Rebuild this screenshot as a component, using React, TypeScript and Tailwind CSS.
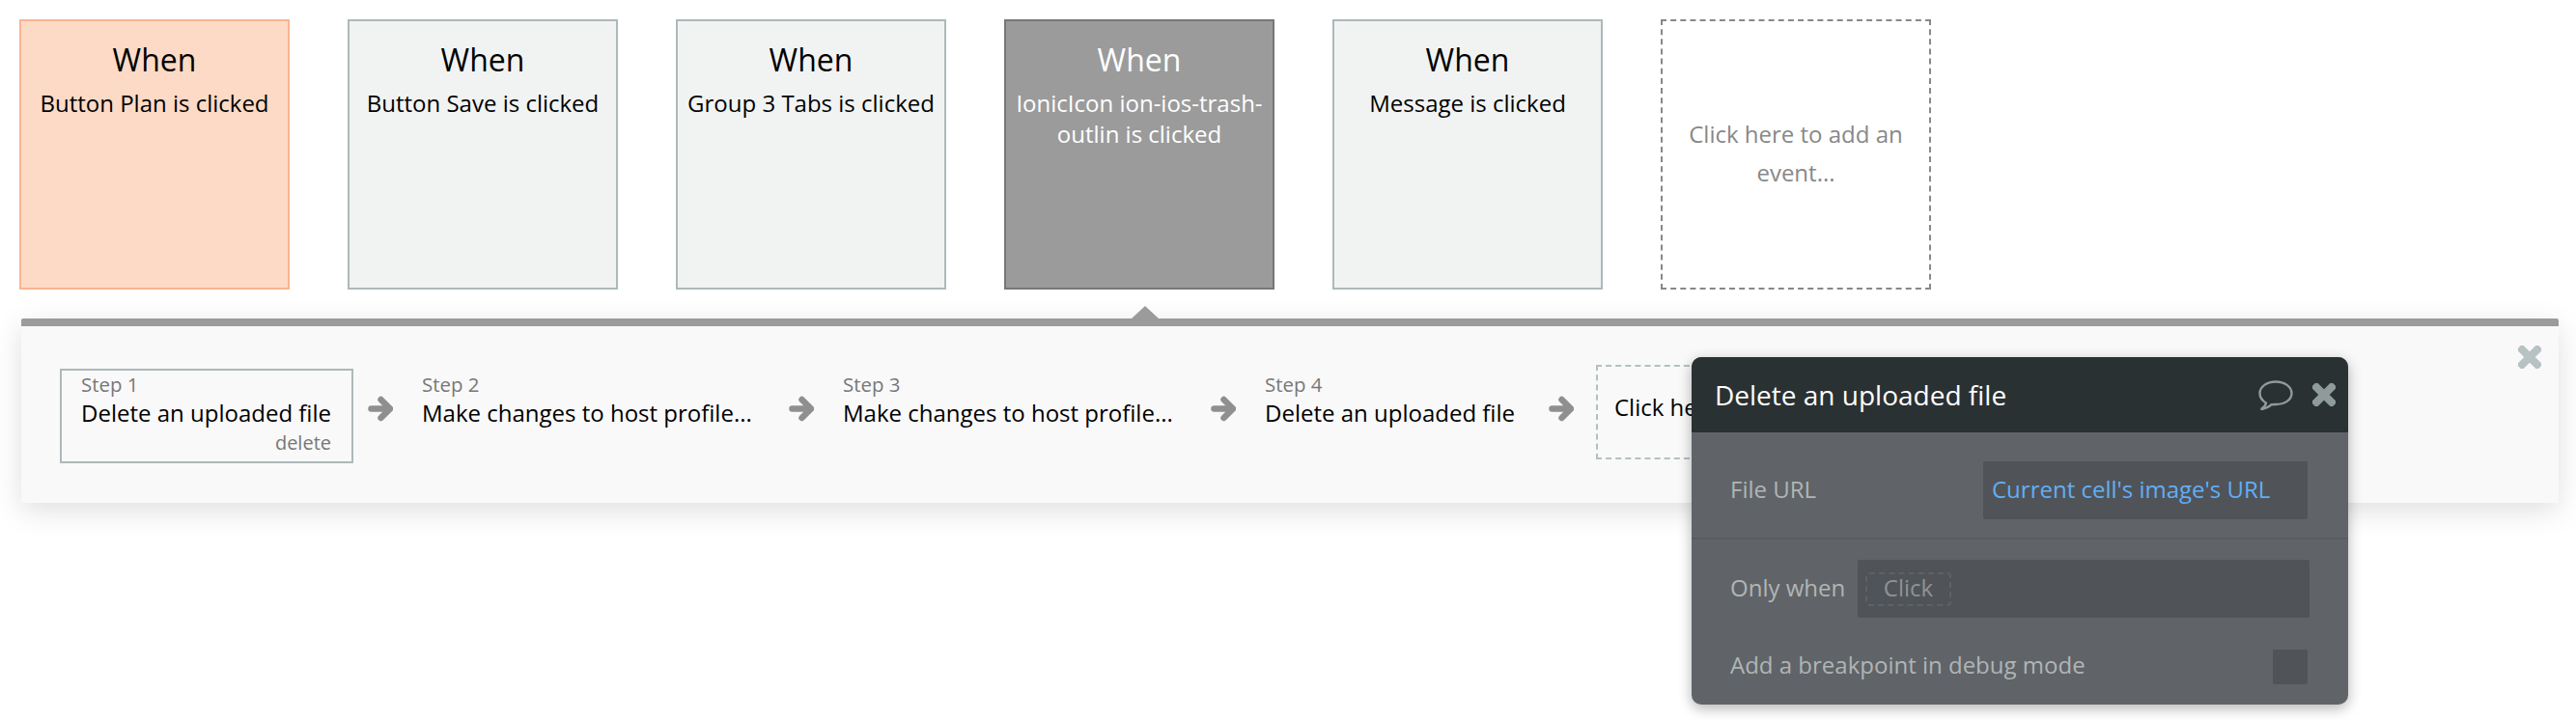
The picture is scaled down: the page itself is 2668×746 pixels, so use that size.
const font = { fontFamily: '"Open Sans", sans-serif' };

const events = [
  { text: 'Button Plan is clicked', box: 'bg-[#fddac5] border-[#f9b48f] text-black' },
  { text: 'Button Save is clicked', box: 'bg-[#f1f3f2] border-[#adb9bb] text-black' },
  { text: 'Group 3 Tabs is clicked', box: 'bg-[#f1f3f2] border-[#adb9bb] text-black' },
  { text: 'IonicIcon ion-ios-trash-outlin is clicked', box: 'bg-[#9b9b9b] border-[#777777] text-white' },
  { text: 'Message is clicked', box: 'bg-[#f1f3f2] border-[#adb9bb] text-black' },
];

const steps = [
  { label: 'Step 1', title: 'Delete an uploaded file', width: 'w-[304px]', active: true },
  { label: 'Step 2', title: 'Make changes to host profile...', width: 'w-[387px]', active: false },
  { label: 'Step 3', title: 'Make changes to host profile...', width: 'w-[388px]', active: false },
  { label: 'Step 4', title: 'Delete an uploaded file', width: 'w-[301px]', active: false },
];

const CloseIcon = ({ color, className }: { color: string; className?: string }) => (
  <svg viewBox="0 0 24 24" className={className} fill={color}>
    <rect x="-3" y="8" width="30" height="8" rx="1.5" transform="rotate(45 12 12)" />
    <rect x="-3" y="8" width="30" height="8" rx="1.5" transform="rotate(-45 12 12)" />
  </svg>
);

const ArrowIcon = () => (
  <svg viewBox="0 0 26 27" className="w-[26px] h-[27px]" fill="none" stroke="#8f8f8f" strokeWidth="6.5" strokeLinejoin="round" strokeLinecap="round">
    <path d="M3.5 13.5H21" />
    <path d="M13.5 4l9.5 9.5L13.5 23" />
  </svg>
);

const BubbleIcon = () => (
  <svg viewBox="0 0 36 31" className="w-[36px] h-[31px]" fill="none" stroke="#8f9a9a" strokeWidth="2.4">
    <path d="M3.5 29.5c2.5-1.5 4-3.5 4.5-6C4 21 1.5 17.5 1.5 13.5 1.5 6.5 9 1.5 18 1.5s16.5 5 16.5 12-7.5 11.5-16.5 11.5c-1.5 0-3 0-4.5.2-2.5 2.5-6 4-10 4.8z" />
  </svg>
);

const EventCard = ({ text, box }: { text: string; box: string }) => (
  <div className={`w-[280px] h-[280px] shrink-0 border-2 px-[6px] pt-[17px] text-center ${box}`}>
    <div className="text-[32px] leading-[46px]">When</div>
    <div className="text-[24px] leading-[32px] mt-[6px]">{text}</div>
  </div>
);

const StepBox = ({ label, title, width, active }: { label: string; title: string; width: string; active: boolean }) => (
  <div className={`h-[98px] shrink-0 border-2 pl-[20px] pr-[21px] ${width} ${active ? 'border-[#adb9bb]' : 'border-transparent'}`}>
    <div className="text-[20.4px] leading-[28px] text-[#777777]">{label}</div>
    <div className="text-[24px] leading-[32px] text-black whitespace-nowrap">{title}</div>
    {active && <div className="text-[20px] leading-[28px] text-right text-[#777777] mt-[1px]">delete</div>}
  </div>
);

export default function App() {
  return (
    <div style={font} className="relative w-[2668px] h-[746px] overflow-hidden bg-white">
      {/* Event row */}
      <div className="flex gap-[60px] pl-[20px] pt-[20px]">
        {events.map((e) => (
          <EventCard key={e.text} text={e.text} box={e.box} />
        ))}
        <div className="w-[280px] h-[280px] shrink-0 border-2 border-dashed border-[#888888] flex items-center justify-center px-[20px] pb-[2px] text-center text-[24px] leading-[40px] text-[#888888]">
          Click here to add an event...
        </div>
      </div>

      {/* Actions panel */}
      <div className="relative ml-[22px] mt-[30px] w-[2628px] h-[191px] border-t-[8px] border-[#9b9b9b] rounded-[2px] bg-[#f9f9f9] shadow-[0_8px_30px_rgba(0,0,0,0.13)]">
        <div className="absolute left-[1150px] top-[-21px] w-0 h-0 border-x-[14px] border-x-transparent border-b-[13px] border-b-[#9b9b9b]" />
        <CloseIcon color="#b7c2c3" className="absolute right-[18px] top-[20px] w-[24px] h-[24px]" />
        <div className="flex items-start pl-[40px] pt-[44px]">
          {steps.map((s) => (
            <div key={s.label} className="flex items-start shrink-0">
              <StepBox label={s.label} title={s.title} width={s.width} active={s.active} />
              <div className="ml-[15px] mr-[8px] mt-[28px]">
                <ArrowIcon />
              </div>
            </div>
          ))}
          <div className="w-[400px] h-[98px] shrink-0 -mt-[4px] ml-[15px] border-2 border-dashed border-[#b3c0c2] pl-[17px] pt-[26px] text-[24px] leading-[32px] text-black whitespace-nowrap">
            Click here to add an action...
          </div>
        </div>
      </div>

      {/* Action editor popup */}
      <div className="absolute left-[1752px] top-[370px] w-[680px] h-[360px] rounded-[10px] overflow-hidden bg-[#606468] shadow-[0_4px_14px_rgba(0,0,0,0.3)]">
        <div className="h-[78px] bg-[#2a3133] flex items-center pl-[24px] pr-[13px]">
          <div className="flex-1 text-[28px] text-white">Delete an uploaded file</div>
          <BubbleIcon />
          <CloseIcon color="#8f9a9a" className="ml-[20px] w-[24px] h-[24px]" />
        </div>
        <div className="h-[111px] pt-[30px] border-b-2 border-[#585c60] pl-[40px] pr-[42px] flex justify-between items-start">
          <div className="text-[24px] leading-[58px] text-[#b0b5b5]">File URL</div>
          <div className="w-[336px] h-[60px] rounded-[2px] bg-[#505458] pl-[9px] text-[24px] leading-[58px] text-[#62aef5]">
            Current cell's image's URL
          </div>
        </div>
        <div className="flex items-center h-[60px] mt-[21px] pl-[40px] pr-[40px]">
          <div className="text-[24px] leading-[32px] -mt-[3px] text-[#b0b5b5] w-[132px]">Only when</div>
          <div className="flex-1 h-[60px] rounded-[2px] bg-[#505458] flex items-center pl-[8px]">
            <div className="w-[89px] h-[35px] rounded-[4px] border-2 border-dashed border-[#5e6265] text-center text-[24px] leading-[28px] text-[#8e9396]">
              Click
            </div>
          </div>
        </div>
        <div className="flex items-center justify-between h-[36px] mt-[33px] pl-[40px] pr-[42px]">
          <div className="text-[24px] leading-[32px] -mt-[4px] text-[#b0b5b5]">Add a breakpoint in debug mode</div>
          <div className="w-[36px] h-[36px] rounded-[2px] bg-[#505458]" />
        </div>
      </div>
    </div>
  );
}
